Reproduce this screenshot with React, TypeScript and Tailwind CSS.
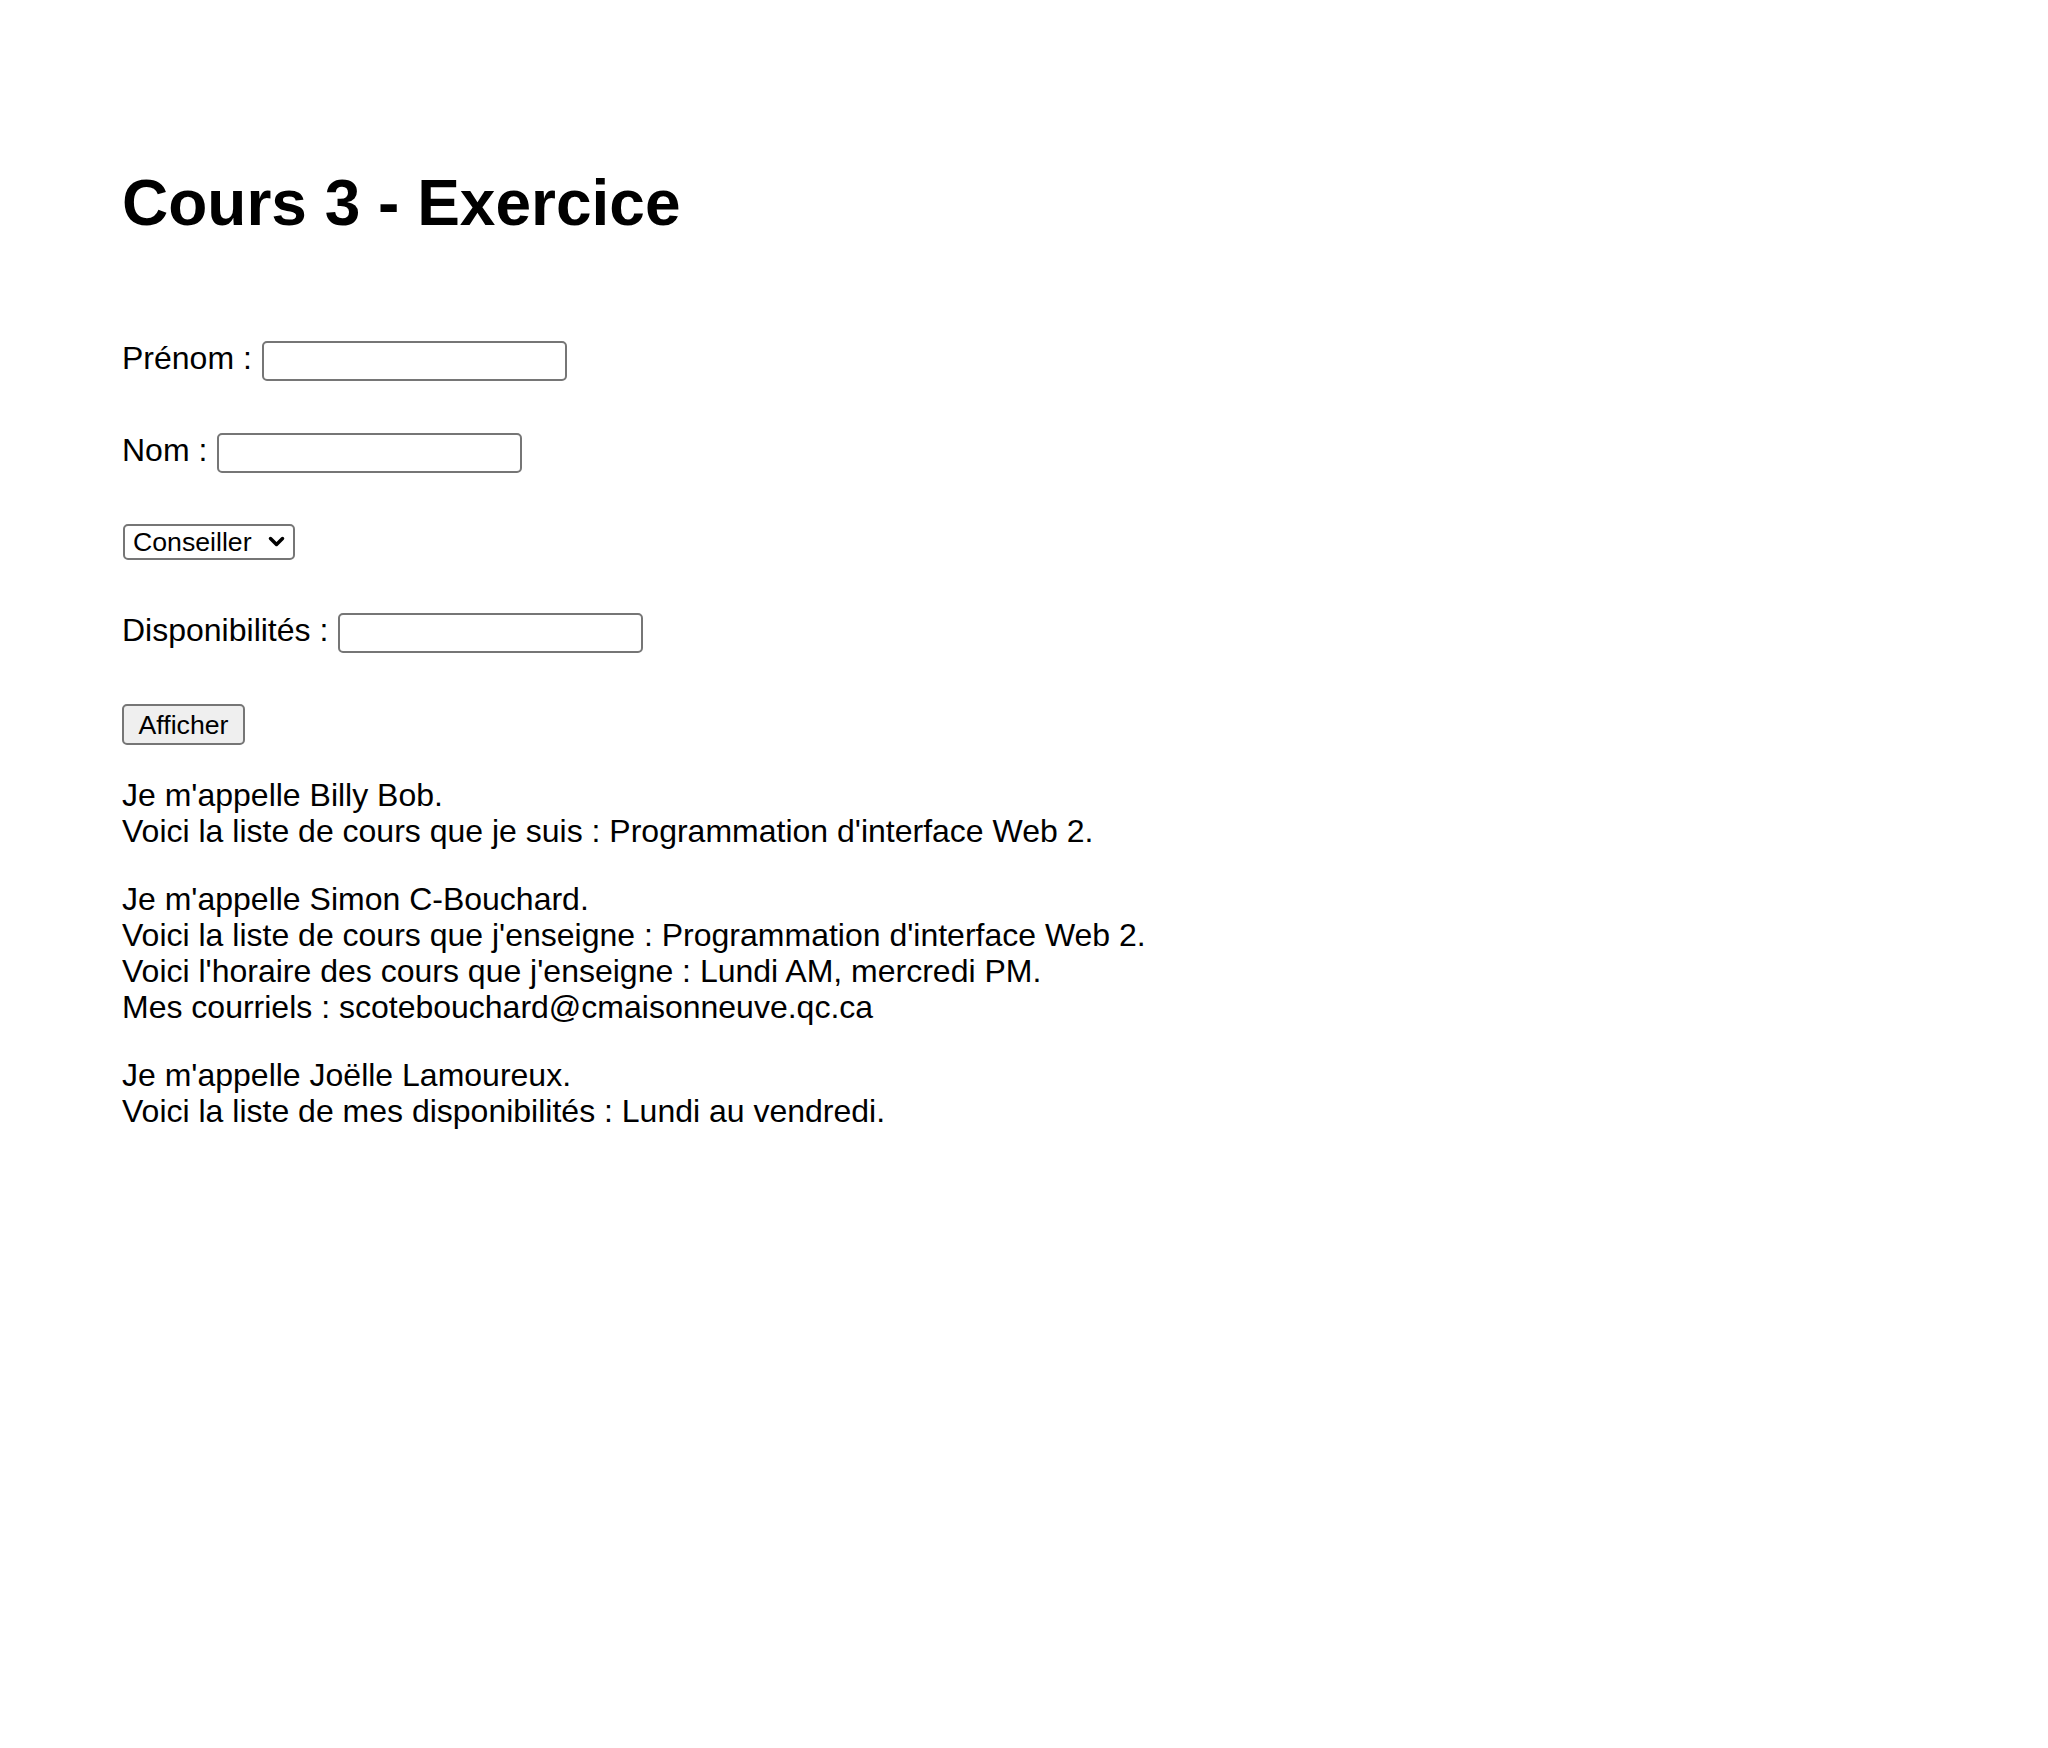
import React from "react";

const inputCls =
  "w-[305px] h-[40px] border-2 border-[#767676] rounded-[5px] bg-white outline-none";

export default function App() {
  return (
    <div className="min-h-[1748px] bg-white text-black [font-family:'Liberation_Sans',Arial,Helvetica,sans-serif] pl-[122px] pt-[166px]">
      <h1 className="text-[64px] leading-[74px] font-bold m-0">Cours 3 - Exercice</h1>

      <div className="flex flex-col items-start">
        <div className="mt-[101px] h-[40px] flex items-center text-[32px] leading-[37px]">
          <span className="-mt-[5px]">Prénom :</span>
          <input type="text" className={inputCls + " ml-[10px]"} />
        </div>

        <div className="mt-[52px] h-[40px] flex items-center text-[32px] leading-[37px]">
          <span className="-mt-[5px]">Nom :</span>
          <input type="text" className={inputCls + " ml-[10px]"} />
        </div>

        <div className="mt-[51px] relative ml-[1px] w-[172px] h-[36px] border-2 border-[#767676] rounded-[5px] bg-white flex items-center">
          <select className="appearance-none bg-transparent w-full h-full pl-[8px] text-[26.67px] leading-[30px] outline-none text-black">
            <option>Conseiller</option>
            <option>Étudiant</option>
            <option>Enseignant</option>
          </select>
          <svg
            className="pointer-events-none absolute right-[8px] top-[10px]"
            width="17"
            height="11"
            viewBox="0 0 17 11"
            fill="none"
          >
            <path d="M2.5 2.5 L8.5 8.5 L14.5 2.5" stroke="black" strokeWidth="3.5" strokeLinecap="round" strokeLinejoin="round" />
          </svg>
        </div>

        <div className="mt-[53px] h-[40px] flex items-center text-[32px] leading-[37px]">
          <span className="-mt-[5px]">Disponibilités :</span>
          <input type="text" className={inputCls + " ml-[10px]"} />
        </div>

        <button className="mt-[51px] w-[123px] h-[41px] border-2 border-[#767676] rounded-[5px] bg-[#efefef] text-[26.67px] leading-[30px] text-black flex items-center justify-center">
          Afficher
        </button>

        <div className="mt-[32px] text-[32px] leading-[36px]">
          <p>
            Je m'appelle Billy Bob.
            <br />
            Voici la liste de cours que je suis : Programmation d'interface Web 2.
          </p>
          <p className="mt-[32px]">
            Je m'appelle Simon C-Bouchard.
            <br />
            Voici la liste de cours que j'enseigne : Programmation d'interface Web 2.
            <br />
            Voici l'horaire des cours que j'enseigne : Lundi AM, mercredi PM.
            <br />
            Mes courriels : scotebouchard@cmaisonneuve.qc.ca
          </p>
          <p className="mt-[32px]">
            Je m'appelle Joëlle Lamoureux.
            <br />
            Voici la liste de mes disponibilités : Lundi au vendredi.
          </p>
        </div>
      </div>
    </div>
  );
}
